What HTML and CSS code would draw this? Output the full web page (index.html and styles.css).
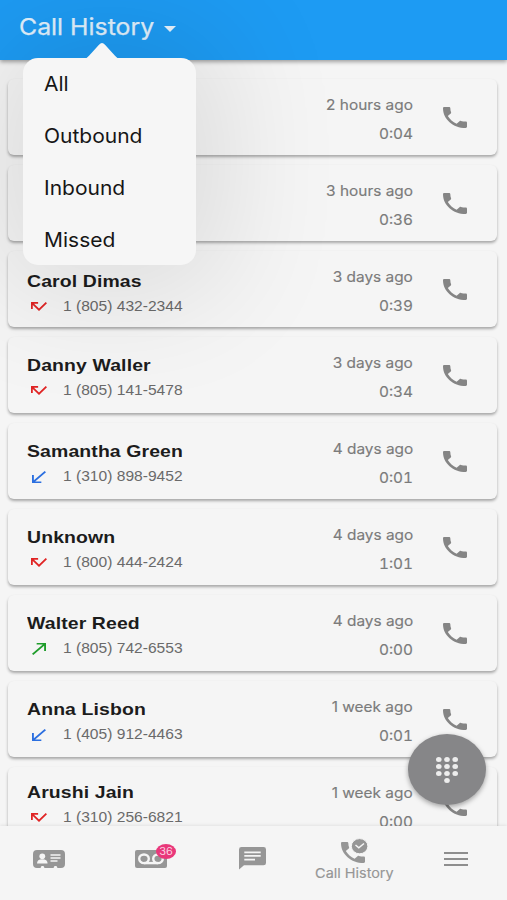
FILE: index.html
```html
<!DOCTYPE html>
<html lang="en">
<head>
<meta charset="utf-8">
<title>Call History</title>
<link rel="stylesheet" href="styles.css">
</head>
<body>
<svg class="defs" aria-hidden="true">
  <symbol id="phone" viewBox="3 3 18 18" preserveAspectRatio="none"><path d="M6.62 10.79c1.44 2.83 3.76 5.14 6.59 6.59l2.2-2.2c.27-.27.67-.36 1.02-.24 1.12.37 2.33.57 3.57.57.55 0 1 .45 1 1V20c0 .55-.45 1-1 1-9.39 0-17-7.61-17-17 0-.55.45-1 1-1h3.5c.55 0 1 .45 1 1 0 1.25.2 2.45.57 3.57.11.35.03.74-.25 1.02l-2.2 2.2z"/></symbol>
  <symbol id="missed" viewBox="3 7 18 10.41" preserveAspectRatio="none"><path d="M19.59 7L12 14.59 6.41 9H11V7H3v8h2v-4.59l7 7 9-9z"/></symbol>
  <symbol id="received" viewBox="5 4 15 15" preserveAspectRatio="none"><path d="M20 5.41L18.59 4 7 15.59V9H5v10h10v-2H8.41z"/></symbol>
  <symbol id="made" viewBox="4 5 15 15" preserveAspectRatio="none"><path d="M9 5v2h6.59L4 18.59 5.41 20 17 8.41V15h2V5z"/></symbol>
</svg>
<div class="app">
  <header class="header">
    <span class="title">Call History</span>
    <svg class="caret" viewBox="0 0 12 6" preserveAspectRatio="none"><path d="M0 0h12L6 6z"/></svg>
  </header>
  <main class="list">
    <article class="card">
      <div class="who"></div>
      <div class="when"><span class="ago">2 hours ago</span><span class="dur">0:04</span></div>
      <svg class="call"><use href="#phone"/></svg>
    </article>
    <article class="card">
      <div class="who"></div>
      <div class="when"><span class="ago">3 hours ago</span><span class="dur">0:36</span></div>
      <svg class="call"><use href="#phone"/></svg>
    </article>
    <article class="card low">
      <div class="who"><span class="name">Carol Dimas</span><div class="line"><svg class="dir missed"><use href="#missed"/></svg><span class="num">1 (805) 432-2344</span></div></div>
      <div class="when"><span class="ago">3 days ago</span><span class="dur">0:39</span></div>
      <svg class="call"><use href="#phone"/></svg>
    </article>
    <article class="card">
      <div class="who"><span class="name">Danny Waller</span><div class="line"><svg class="dir missed"><use href="#missed"/></svg><span class="num">1 (805) 141-5478</span></div></div>
      <div class="when"><span class="ago">3 days ago</span><span class="dur">0:34</span></div>
      <svg class="call"><use href="#phone"/></svg>
    </article>
    <article class="card">
      <div class="who"><span class="name">Samantha Green</span><div class="line"><svg class="dir received"><use href="#received"/></svg><span class="num">1 (310) 898-9452</span></div></div>
      <div class="when"><span class="ago">4 days ago</span><span class="dur">0:01</span></div>
      <svg class="call"><use href="#phone"/></svg>
    </article>
    <article class="card">
      <div class="who"><span class="name">Unknown</span><div class="line"><svg class="dir missed"><use href="#missed"/></svg><span class="num">1 (800) 444-2424</span></div></div>
      <div class="when"><span class="ago">4 days ago</span><span class="dur">1:01</span></div>
      <svg class="call"><use href="#phone"/></svg>
    </article>
    <article class="card">
      <div class="who"><span class="name">Walter Reed</span><div class="line"><svg class="dir made"><use href="#made"/></svg><span class="num">1 (805) 742-6553</span></div></div>
      <div class="when"><span class="ago">4 days ago</span><span class="dur">0:00</span></div>
      <svg class="call"><use href="#phone"/></svg>
    </article>
    <article class="card">
      <div class="who"><span class="name">Anna Lisbon</span><div class="line"><svg class="dir received"><use href="#received"/></svg><span class="num">1 (405) 912-4463</span></div></div>
      <div class="when"><span class="ago">1 week ago</span><span class="dur">0:01</span></div>
      <svg class="call"><use href="#phone"/></svg>
    </article>
    <article class="card high">
      <div class="who"><span class="name">Arushi Jain</span><div class="line"><svg class="dir missed"><use href="#missed"/></svg><span class="num">1 (310) 256-6821</span></div></div>
      <div class="when"><span class="ago">1 week ago</span><span class="dur">0:00</span></div>
      <svg class="call"><use href="#phone"/></svg>
    </article>
  </main>
  <nav class="tabs">
    <div class="tab">
      <svg class="i-contacts" viewBox="0 0 32 18"><path fill-rule="evenodd" d="M4 0H28Q32 0 32 4V14Q32 18 28 18H24.500L23.500 16H21.500L20.500 18H11.500L10.500 16H8.500L7.500 18H4Q0 18 0 14V4Q0 0 4 0Z"/><g class="cut"><ellipse cx="9.3" cy="6.3" rx="2.9" ry="2.8"/><path d="M4 13.500Q4 9.2 9.3 9.2T14.6 13.500ZM17.500 4.2H27.500V5.8H17.500ZM17.500 7.2H27.500V8.8H17.500ZM17.500 10.2H24.500V11.700H17.500Z"/></g></svg>
    </div>
    <div class="tab">
      <div class="vm">
        <svg class="i-vm" viewBox="0 0 32 18"><rect width="32" height="18" rx="2"/><g class="ring"><ellipse cx="9" cy="8.8" rx="4.8" ry="4.3"/><ellipse cx="23" cy="8.8" rx="4.8" ry="4.3"/><path d="M9 13.1H23"/></g></svg>
        <span class="badge"><span>36</span></span>
      </div>
    </div>
    <div class="tab">
      <svg class="i-chat" viewBox="0 0 27 24" preserveAspectRatio="none"><path d="M2.5 0H24.5Q27 0 27 2.5V16.7Q27 19 24.5 19H5L0 23.5V2.5Q0 0 2.5 0Z"/><path class="cut" d="M5.3 4.6H21.7V6.4H5.3ZM5.3 8.4H21.7V10.2H5.3ZM5.3 12.2H16V14H5.3Z"/></svg>
    </div>
    <div class="tab active">
      <svg class="i-hist" viewBox="0 0 27 25"><svg x="0" y="3" width="24" height="21"><use href="#phone"/></svg><ellipse class="halo" cx="18.6" cy="7.2" rx="8.3" ry="7.6"/><path class="tick" d="M14.500 6L17.800 8.800L23 4.500"/></svg>
      <span class="tab-label">Call History</span>
    </div>
    <div class="tab">
      <div class="burger"><i></i><i></i><i></i></div>
    </div>
  </nav>
  <div class="menu">
    <svg class="arrow" viewBox="0 0 34 16"><path d="M0 16Q1.5 16 4 13.2L14 2.2Q17 -1.2 20 2.2L30 13.2Q32.500 16 34 16Z"/></svg>
    <span>All</span><span>Outbound</span><span>Inbound</span><span>Missed</span>
  </div>
  <div class="fab">
    <svg viewBox="0 0 22 26"><g><ellipse cx="2.8" cy="2.6" rx="2.8" ry="2.5"/><ellipse cx="11" cy="2.6" rx="2.8" ry="2.5"/><ellipse cx="19.200" cy="2.6" rx="2.8" ry="2.5"/><ellipse cx="2.8" cy="9.600" rx="2.8" ry="2.5"/><ellipse cx="11" cy="9.600" rx="2.8" ry="2.5"/><ellipse cx="19.200" cy="9.600" rx="2.8" ry="2.5"/><ellipse cx="2.8" cy="16.600" rx="2.8" ry="2.5"/><ellipse cx="11" cy="16.600" rx="2.8" ry="2.5"/><ellipse cx="19.200" cy="16.600" rx="2.8" ry="2.5"/><ellipse cx="11" cy="23.500" rx="2.8" ry="2.5"/></g></svg>
  </div>
</div>
</body>
</html>
```
FILE: styles.css
```css
* { box-sizing: border-box; }
body { margin: 0; background: #f5f5f5; font-family: Inter, "Liberation Sans", sans-serif; }
svg { display: block; }
.defs { display: none; }
.app { position: relative; width: 507px; height: 900px; display: flex; flex-direction: column; overflow: hidden; }

.header { position: relative; flex: none; height: 60px; padding: 0 0 6px 19px; display: flex; align-items: center; background: #1d9bf3; box-shadow: 0 2px 4px rgba(0,0,0,.35); }
.title { width: 145px; font-size: 23px; color: #e0f1fd; -webkit-text-stroke: .25px #e0f1fd; white-space: nowrap; transform: scaleX(1.08); transform-origin: left; }
.caret { width: 12px; height: 6px; margin-top: 3px; fill: #e6f3fd; }

.list { flex: none; height: 766px; padding: 19px 10px 0 8px; display: flex; flex-direction: column; gap: 10px; overflow: hidden; }
.card { flex: none; height: 76px; padding: 0 30px 0 19px; display: flex; border-radius: 6px; background: #f5f5f5; box-shadow: 0 2px 3px rgba(0,0,0,.32); }
.who { flex: 1; padding-top: 19px; }
.low .who { padding-top: 21px; }
.high .who { padding-top: 16px; }
.name { display: block; height: 20px; font: bold 17px/20px "Liberation Sans", Arial, sans-serif; letter-spacing: .1px; color: #1c1c1c; white-space: nowrap; transform: scaleX(1.143); transform-origin: left; }
.line { display: flex; align-items: center; height: 20px; margin-top: 4px; }
.dir { flex: none; }
.missed { width: 16px; height: 9px; margin: 0 16px 0 4px; fill: #e02424; }
.received, .made { width: 14px; height: 12px; margin: 1px 17px 0 5px; }
.received { fill: #2b6fe0; }
.made { fill: #1f9d2b; }
.num { font: 14.5px/20px "Liberation Sans", Arial, sans-serif; color: #6a6a6a; white-space: nowrap; transform: scaleX(1.075); transform-origin: left; }
.when { display: flex; flex-direction: column; align-items: flex-end; gap: 9px; padding-top: 16px; margin-right: 30px; color: #7b7b7b; font-size: 14px; line-height: 20px; -webkit-text-stroke: .15px #7b7b7b; }
.when span { transform: scaleX(1.1); transform-origin: right; white-space: nowrap; }
.when .dur { font-variant-numeric: tabular-nums; }
.call { width: 24px; height: 21px; margin-top: 27.500px; fill: #858585; }

.tabs { position: relative; flex: none; height: 74px; display: grid; grid-template-columns: 97px 108px 95px 108px 96px; background: #f5f5f5; box-shadow: 0 -1px 3px rgba(0,0,0,.08); fill: #969696; }
.tab { display: flex; flex-direction: column; align-items: center; }
.cut { fill: #f5f5f5; }
.i-contacts { width: 32px; height: 18px; margin-top: 24px; }
.vm { position: relative; margin-top: 24px; }
.i-vm { width: 32px; height: 18px; }
.ring { fill: none; stroke: #f5f5f5; stroke-width: 2.400; }
.badge { position: absolute; left: 21px; top: -6px; width: 20px; height: 15px; border-radius: 50%; background: #e9387a; color: #fbd3e2; font-size: 10px; line-height: 15px; text-align: center; }
.badge span { display: block; transform: scaleX(1.1); }
.i-chat { width: 27px; height: 23px; margin-top: 21px; }
.i-hist { width: 27px; height: 25px; margin-top: 13px; overflow: visible; }
.halo { stroke: #f5f5f5; stroke-width: 1; }
.tick { fill: none; stroke: #f5f5f5; stroke-width: 1.500; }
.tab-label { margin-top: 1px; font-size: 13px; line-height: 16px; color: #969696; -webkit-text-stroke: .15px #969696; white-space: nowrap; transform: scaleX(1.11); }
.burger { width: 24px; margin-top: 26px; display: flex; flex-direction: column; gap: 4px; }
.burger i { height: 2px; background: #8e8e8e; }

.menu { position: absolute; left: 23px; top: 58px; width: 173px; height: 207px; padding-left: 21px; border-radius: 15px; background: #f6f6f6; box-shadow: 0 0 120px 30px rgba(0,0,0,.1); display: flex; flex-direction: column; }
.menu span { height: 51.900px; line-height: 52px; font-size: 20px; color: #161616; transform: scaleX(1.05); transform-origin: left; white-space: nowrap; }
.arrow { position: absolute; left: 62px; top: -16px; width: 34px; height: 17px; fill: #f6f6f6; }

.fab { position: absolute; left: 408px; top: 734px; width: 78px; height: 71px; border-radius: 50%; background: #868688; box-shadow: 0 2px 5px rgba(0,0,0,.35); display: flex; align-items: center; justify-content: center; }
.fab svg { width: 22px; height: 26px; fill: #ededed; }
```
